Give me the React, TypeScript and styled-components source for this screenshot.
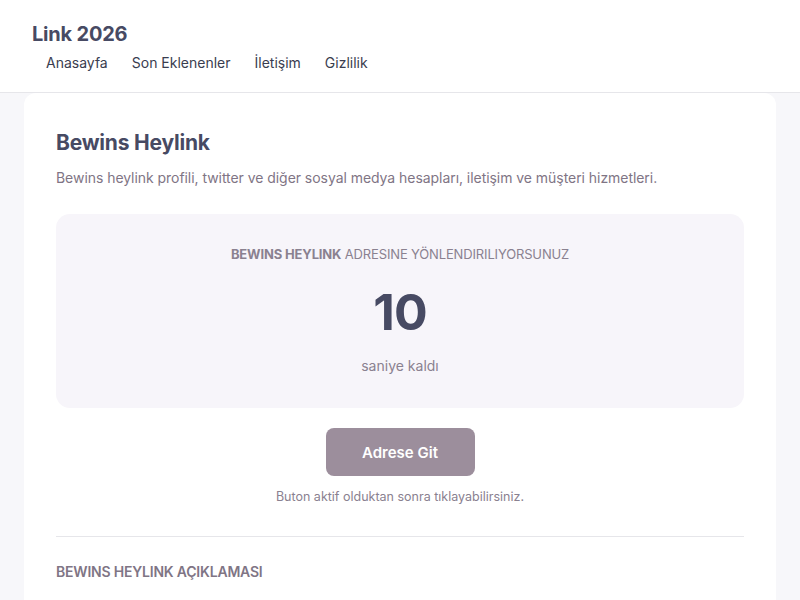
import React from 'react';
import styled, { createGlobalStyle } from 'styled-components';

const GlobalStyle = createGlobalStyle`
  html, body {
    margin: 0;
    padding: 0;
    background: #f7f7fa;
    font-family: Inter, "Noto Sans", sans-serif;
  }
  * { box-sizing: border-box; }
`;

const Header = styled.header`
  background: #ffffff;
  border-bottom: 1px solid #e6e6ea;
  height: 93px;
  padding: 21px 32px 0;
`;

const Brand = styled.div`
  font-size: 20px;
  font-weight: 700;
  color: #474a63;
  line-height: 26px;
  letter-spacing: -0.2px;
`;

const Nav = styled.nav`
  display: flex;
  gap: 24px;
  padding: 6px 0 0 14px;
`;

const NavLink = styled.a`
  font-size: 14px;
  color: #3a3d4f;
  line-height: 20px;
  text-decoration: none;
`;

const Main = styled.main`
  padding: 0 24px;
`;

const Card = styled.section`
  background: #ffffff;
  border-radius: 12px;
  padding: 36px 32px 20px;
  min-height: 520px;
`;

const Title = styled.h1`
  margin: 0;
  font-size: 21px;
  font-weight: 700;
  color: #474a63;
  line-height: 28px;
  letter-spacing: -0.2px;
`;

const Lead = styled.p`
  margin: 11px 0 0;
  font-size: 14px;
  color: #7f7585;
  line-height: 20px;
  letter-spacing: -0.05px;
`;

const Countdown = styled.div`
  margin-top: 26px;
  background: #f7f5fa;
  border-radius: 14px;
  height: 194px;
  display: flex;
  flex-direction: column;
  align-items: center;
  padding-top: 31px;
`;

const Notice = styled.div`
  font-size: 13px;
  color: #8a8190;
  line-height: 18px;
  letter-spacing: -0.15px;
  text-transform: uppercase;

  strong {
    font-weight: 700;
  }
`;

const Number = styled.div`
  margin-top: 17px;
  font-size: 50px;
  font-weight: 700;
  color: #474a63;
  line-height: 64px;
  letter-spacing: -1px;
`;

const Sub = styled.div`
  margin-top: 12px;
  font-size: 14px;
  color: #8a8190;
  line-height: 20px;
`;

const Actions = styled.div`
  display: flex;
  flex-direction: column;
  align-items: center;
  margin-top: 20px;
`;

const GoButton = styled.button`
  width: 149px;
  height: 48px;
  border: none;
  border-radius: 8px;
  background: #9c8e9c;
  color: #ffffff;
  font-family: inherit;
  font-size: 15px;
  font-weight: 600;
  cursor: not-allowed;
`;

const Hint = styled.div`
  margin-top: 12px;
  font-size: 12.5px;
  color: #8a8190;
  line-height: 18px;
`;

const Divider = styled.hr`
  margin: 30px 0 0;
  border: none;
  border-top: 1px solid #e6e6ea;
`;

const SectionTitle = styled.h2`
  margin: 25px 0 0;
  font-size: 14px;
  font-weight: 600;
  color: #7f7585;
  line-height: 20px;
  letter-spacing: -0.2px;
`;

const Body = styled.p`
  margin: 16px 0 0;
  font-size: 14px;
  color: #7f7585;
  line-height: 22px;
`;

export default function App() {
  return (
    <>
      <GlobalStyle />
      <Header>
        <Brand>Link 2026</Brand>
        <Nav>
          <NavLink href="#">Anasayfa</NavLink>
          <NavLink href="#">Son Eklenenler</NavLink>
          <NavLink href="#">İletişim</NavLink>
          <NavLink href="#">Gizlilik</NavLink>
        </Nav>
      </Header>
      <Main>
        <Card>
          <Title>Bewins Heylink</Title>
          <Lead>
            Bewins heylink profili, twitter ve diğer sosyal medya hesapları, iletişim ve müşteri hizmetleri.
          </Lead>
          <Countdown>
            <Notice>
              <strong>Bewins Heylink</strong> adresine yönlendiriliyorsunuz
            </Notice>
            <Number>10</Number>
            <Sub>saniye kaldı</Sub>
          </Countdown>
          <Actions>
            <GoButton disabled>Adrese Git</GoButton>
            <Hint>Buton aktif olduktan sonra tıklayabilirsiniz.</Hint>
          </Actions>
          <Divider />
          <SectionTitle>BEWINS HEYLINK AÇIKLAMASI</SectionTitle>
          <Body>
            Bewins heylink sayfası üzerinden ÜYELİK, giriş ve sosyal medya hesaplarına ulaşabilirsiniz.
          </Body>
        </Card>
      </Main>
    </>
  );
}
